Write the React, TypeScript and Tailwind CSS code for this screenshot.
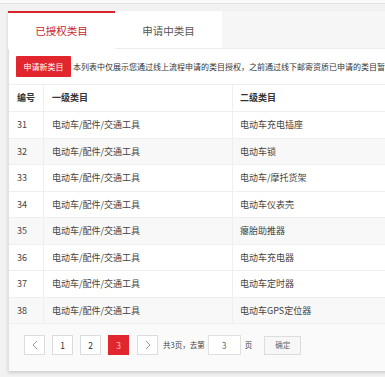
const rows = [
  { id: 31, cat1: '电动车/配件/交通工具', cat2: '电动车充电插座', alt: false },
  { id: 32, cat1: '电动车/配件/交通工具', cat2: '电动车锁', alt: true },
  { id: 33, cat1: '电动车/配件/交通工具', cat2: '电动车/摩托货架', alt: false },
  { id: 34, cat1: '电动车/配件/交通工具', cat2: '电动车仪表壳', alt: false },
  { id: 35, cat1: '电动车/配件/交通工具', cat2: '瘪胎助推器', alt: true },
  { id: 36, cat1: '电动车/配件/交通工具', cat2: '电动车充电器', alt: false },
  { id: 37, cat1: '电动车/配件/交通工具', cat2: '电动车定时器', alt: false },
  { id: 38, cat1: '电动车/配件/交通工具', cat2: '电动车GPS定位器', alt: true },
]

const font = { fontFamily: '"Noto Sans CJK SC", "Noto Sans", sans-serif' }

function Chevron({ dir }: { dir: 'left' | 'right' }) {
  return (
    <svg width="6" height="10" viewBox="0 0 6 10" fill="none" stroke="#999" strokeWidth="1">
      {dir === 'left' ? <polyline points="5,1 1,5 5,9" /> : <polyline points="1,1 5,5 1,9" />}
    </svg>
  )
}

export default function App() {
  return (
    <div className="w-[385px] h-[377px] overflow-hidden bg-[#f2f2f2]" style={font}>
      {/* top strip */}
      <div className="h-[4px] bg-[#fbfbfb] border-b border-[#e4e4e4]" />

      <div className="ml-[8px] mt-[7px] w-[420px] shadow-[0_2px_3px_rgba(0,0,0,0.15)]">
        {/* Tabs */}
        <div className="flex h-[38px] bg-[#f6f6f6]">
          <div className="w-[107px] bg-white border-t-2 border-[#d7262d] flex items-center justify-center text-[10.5px] text-[#c9252c]">
            已授权类目
          </div>
          <div className="w-[107px] bg-white border-t-2 border-transparent border-b border-b-[#ececec] flex items-center justify-center text-[10.5px] text-[#555]">
            申请中类目
          </div>
          <div className="flex-1 border-b border-[#ececec]" />
        </div>

        <div className="bg-white border-l border-[#e2e2e2]">
          {/* Notice */}
          <div className="flex items-center gap-[2px] pl-[7px] pt-[7px] pb-[7px] whitespace-nowrap">
            <button className="h-[21px] w-[55px] shrink-0 bg-[#e1262d] text-white text-[8px] rounded-[1px] flex items-center justify-center">
              申请新类目
            </button>
            <span className="text-[8px] text-[#333]">
              本列表中仅展示您通过线上流程申请的类目授权，之前通过线下邮寄资质已申请的类目暂不显示
            </span>
          </div>

          {/* Table */}
          <div className="text-[9px] text-[#444]">
            <div className="flex h-[28px] border-t border-b border-[#eeeeee] font-bold text-[#333]">
              <div className="w-[34px] pl-[8px] flex items-center">编号</div>
              <div className="w-[189px] pl-[8px] flex items-center border-l border-[#eeeeee]">一级类目</div>
              <div className="flex-1 pl-[7px] flex items-center border-l border-[#eeeeee]">二级类目</div>
            </div>
            {rows.map((r) => (
              <div
                key={r.id}
                className={`flex h-[26.5px] border-b border-[#efefef] ${r.alt ? 'bg-[#f8f8f8]' : 'bg-white'}`}
              >
                <div className="w-[34px] pl-[8px] flex items-center">{r.id}</div>
                <div className="w-[189px] pl-[8px] flex items-center border-l border-[#eeeeee]">{r.cat1}</div>
                <div className="flex-1 pl-[7px] flex items-center border-l border-[#eeeeee]">{r.cat2}</div>
              </div>
            ))}
          </div>

          {/* Pagination */}
          <div className="h-[47px] bg-[#fafafa] flex items-start pt-[11px] pl-[15px] gap-[7px]">
            <div className="w-[21px] h-[20px] border border-[#dcdcdc] bg-white flex items-center justify-center">
              <Chevron dir="left" />
            </div>
            <div className="w-[21px] h-[20px] border border-[#dcdcdc] bg-white flex items-center justify-center text-[8.5px] text-[#333]">
              1
            </div>
            <div className="w-[21px] h-[20px] border border-[#dcdcdc] bg-white flex items-center justify-center text-[8.5px] text-[#333]">
              2
            </div>
            <div className="w-[21px] h-[20px] bg-[#e1262d] flex items-center justify-center text-[8.5px] text-[#f7c7c9]">
              3
            </div>
            <div className="w-[21px] h-[20px] border border-[#dcdcdc] bg-white flex items-center justify-center ml-[1px]">
              <Chevron dir="right" />
            </div>
            <div className="flex items-center h-[20px] text-[7.5px] text-[#444] gap-[3px] -ml-[2px]">
              <span>共3页，去第</span>
              <div className="w-[33px] h-[20px] border border-[#e0e0e0] bg-white flex items-center justify-center text-[8.5px] text-[#666]">
                3
              </div>
              <span className="ml-[1px]">页</span>
              <div className="ml-[9px] w-[37px] h-[19px] border border-[#dcdcdc] bg-[#f7f7f7] flex items-center justify-center text-[7.5px] text-[#666]">
                确定
              </div>
            </div>
          </div>
        </div>
      </div>
    </div>
  )
}
